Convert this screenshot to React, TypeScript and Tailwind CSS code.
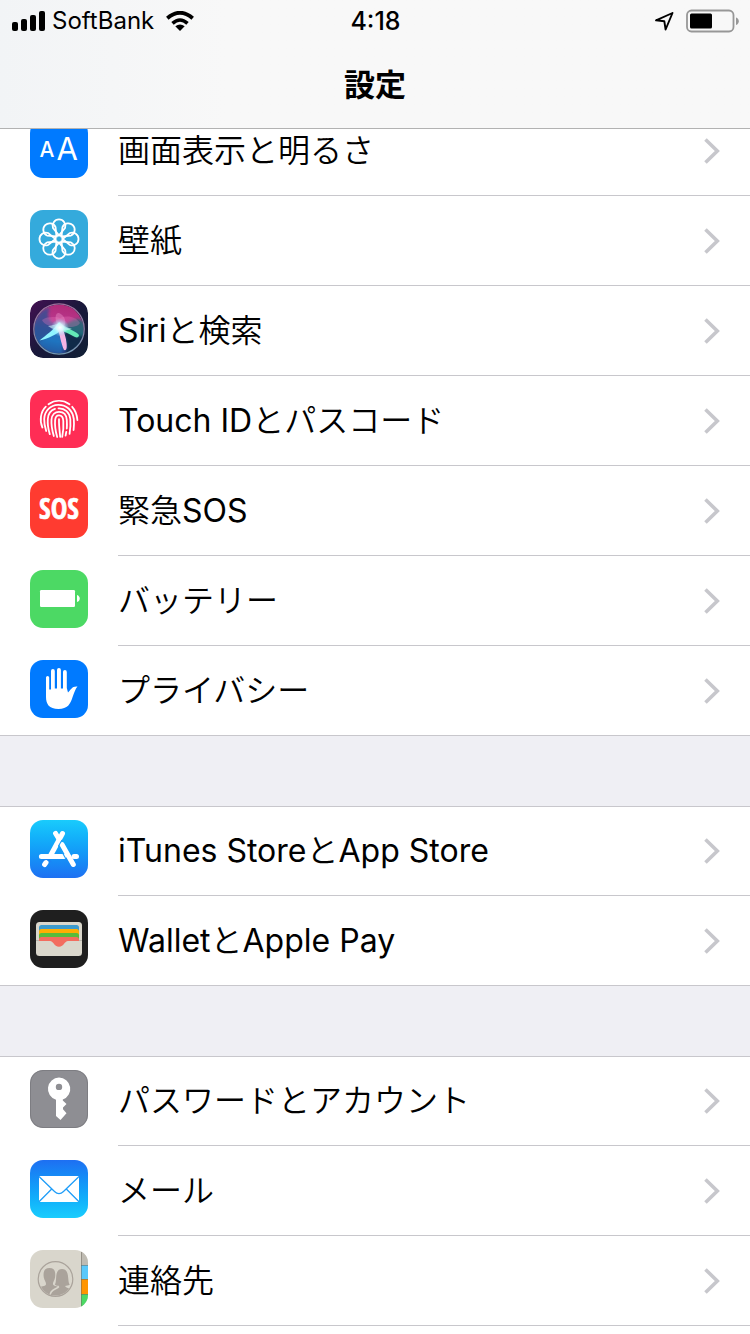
import type { ReactNode } from "react";

function Tile({ className, children }: { className: string; children: ReactNode }) {
  return (
    <svg viewBox="0 0 58 58" aria-hidden="true" className={"mt-3.5 size-[58px] shrink-0 overflow-hidden rounded-[13px] " + className}>
      {children}
    </svg>
  );
}

function DisplayIcon() {
  return (
    <Tile className="bg-[#007aff]">
      <g fill="#fff" fontFamily="Inter, 'Liberation Sans', sans-serif">
        <text x="9.5" y="37" fontSize="21" fontWeight="500">A</text>
        <text x="26.5" y="40" fontSize="31" fontWeight="400">A</text>
      </g>
    </Tile>
  );
}

function WallpaperIcon() {
  const angles = [0, 45, 90, 135, 180, 225, 270, 315];
  return (
    <Tile className="bg-[#34aadc]">
      <g fill="none" stroke="#fff" strokeWidth="1.8">
        {angles.map((a) => (
          <g key={a} transform={`rotate(${a} 29 29)`}>
            <path d="M29 25.4L23 18.1A6.4 6.4 0 1 1 35 18.1Z" />
          </g>
        ))}
        <circle cx="29" cy="29" r="3.6" />
      </g>
    </Tile>
  );
}

function SiriIcon() {
  return (
    <Tile className="">
      <defs>
        <linearGradient id="siri-bg" x1="0" y1="0" x2="1" y2="1">
          <stop offset="0" stopColor="#431052" />
          <stop offset="0.5" stopColor="#19183a" />
          <stop offset="1" stopColor="#102035" />
        </linearGradient>
        <linearGradient id="siri-orb" x1="0.6" y1="0" x2="0.4" y2="1">
          <stop offset="0" stopColor="#b02a78" />
          <stop offset="0.35" stopColor="#b8378c" />
          <stop offset="0.55" stopColor="#3d5ca6" />
          <stop offset="0.75" stopColor="#1f6cb5" />
          <stop offset="1" stopColor="#2b2a6b" />
        </linearGradient>
        <linearGradient id="siri-ring" x1="0" y1="0" x2="0" y2="1">
          <stop offset="0" stopColor="#a06f9c" />
          <stop offset="1" stopColor="#7299b4" />
        </linearGradient>
        <radialGradient id="siri-glow">
          <stop offset="0" stopColor="#fff" />
          <stop offset="0.4" stopColor="#d9fbff" stopOpacity="0.8" />
          <stop offset="1" stopColor="#7fe0ff" stopOpacity="0" />
        </radialGradient>
        <filter id="siri-soft" x="-20%" y="-20%" width="140%" height="140%">
          <feGaussianBlur stdDeviation="1.6" />
        </filter>
        <clipPath id="siri-clip">
          <circle cx="29" cy="29" r="24.5" />
        </clipPath>
      </defs>
      <rect width="58" height="58" rx="13" fill="url(#siri-bg)" />
      <g clipPath="url(#siri-clip)">
        <circle cx="29" cy="29" r="24.5" fill="url(#siri-orb)" />
        <g filter="url(#siri-soft)">
          <path d="M3 30C4 16 12 8 20 8C15 16 20 23 28 28L8 42C4 38 3 34 3 30Z" fill="#2a4f94" opacity="0.8" />
          <path d="M8 43L29 30L33 54C22 56 12 50 8 43Z" fill="#1f7cc8" opacity="0.6" />
          <path d="M31 28L56 36C52 48 44 54 36 56C38 46 35 36 31 28Z" fill="#10243e" opacity="0.9" />
          <path d="M31 27C40 22 48 14 56 24V36L46 36Z" fill="#176b74" opacity="0.85" />
        </g>
        <path d="M12 20C18 16 26 17 30 18C38 15 46 17 50 23C48 27 40 28 30 27C22 27 14 25 12 20Z" fill="#f07cc0" opacity="0.3" />
        <path d="M29 28C23 18 26 12 29 13C34 15 38 22 33 28Z" fill="#f6a3d6" opacity="0.35" />
        <path d="M29 22C24 30 16 35 9.500 40.500C18 39 27 34 33 29Z" fill="#8ff5ff" />
        <path d="M29 24C37 29 45 30 49 35C49 38 46 38 43 36C38 33 33 31 28 30Z" fill="#63eab7" />
        <path d="M27 27C30 34 31 44 34 50C37 51 37 47 36.500 43C36 37 34 32 32 27Z" fill="#f4b4e4" />
        <path d="M18 26C23 25 27 25 30 22C32 26 37 27 42 29C36 31 26 32 18 26Z" fill="#dffcff" opacity="0.6" />
        <circle cx="30" cy="27.500" r="9" fill="url(#siri-glow)" />
      </g>
      <circle cx="29" cy="29" r="25.2" fill="none" stroke="url(#siri-ring)" strokeWidth="1.3" />
    </Tile>
  );
}

function TouchIdIcon() {
  return (
    <Tile className="bg-[#ff2d55]">
      <g fill="none" stroke="#fff" strokeWidth="1.8" strokeLinecap="round">
        <path d="M18.5 14.2C25 9.8 33 9.8 39.5 14.2" />
        <path d="M12.4 37.5C9.4 31 10.4 22 15.8 16.7" />
        <path d="M42.2 16.8C45.4 20.3 47 24.5 47.4 30" />
        <path d="M16.2 41C14.6 36 14 33 14.2 29C14.6 20.6 20.6 15.2 28 14.9C36.5 14.7 42.5 20 43.8 29C44.2 33 44.1 36 43.6 40" />
        <path d="M19.8 44.2C17.9 38 17.4 34 17.8 29C18.2 23.8 21 20.2 25 18.9" />
        <path d="M28.5 18.3C35 18 39.6 22.4 40.3 29C40.7 34 40.4 39 39.6 43.8" />
        <path d="M23.8 46C21.5 38.5 21.2 34 21.5 29.5C21.9 24.7 25 21.8 29 21.8C33.6 21.8 36.5 25 36.8 30C37 33 37 36 36.8 38.5" />
        <path d="M36.3 41.8L35.6 45.7" />
        <path d="M27.2 47C25 39.5 24.8 34 25.1 30.2C25.4 27 27 25.3 29.1 25.4C32 25.5 33.2 28 33.3 31C33.7 37 33.3 42 32.2 46.9" />
        <path d="M29 29.2C28.8 35 29.5 40 30.2 46.8" />
      </g>
    </Tile>
  );
}

function SosIcon() {
  return (
    <Tile className="bg-[#ff3b30]">
      <text x="29" y="39" textAnchor="middle" fill="#fff" stroke="#fff" strokeWidth="0.6" fontSize="28" fontWeight="700" fontFamily="'Open Sans Condensed', 'DejaVu Sans Condensed', 'Liberation Sans Narrow', Roboto, sans-serif">
        SOS
      </text>
    </Tile>
  );
}

function BatteryIcon() {
  return (
    <Tile className="bg-[#4cd964]">
      <rect x="10" y="20" width="35" height="17" rx="1.2" fill="#fff" />
      <path d="M47 25C50.7 26 50.7 31 47 32Z" fill="#fff" />
    </Tile>
  );
}

function PrivacyIcon() {
  return (
    <Tile className="bg-[#007aff]">
      <path
        d="M16 17.500a1.600 1.600 0 0 1 3.200 0V29.500H21V11a1.900 1.900 0 0 1 3.800 0V28.500H27V10a1.950 1.950 0 0 1 3.900 0V28.500H33V12a1.900 1.900 0 0 1 3.800 0V28L38 32.500C41 30 41.500 26 47.500 26.500C45.500 28.500 44.500 32 42.600 37C40.500 44 37.500 49 28.500 49C19 49 16 44 16 37Z"
        fill="#fff"
      />
    </Tile>
  );
}

function StoreIcon() {
  return (
    <Tile className="bg-linear-to-b from-[#1acbfc] to-[#1e70f2]">
      <g stroke="#fff" strokeWidth="5" strokeLinecap="round" fill="none">
        <path d="M32.5 13.5L20 36.5" />
        <path d="M16 42.5L14.6 44.5" />
        <path d="M11.4 36.5H34M44 36.5H46.5" />
        <path d="M25.6 13.5L28.5 18.2" />
        <path d="M32 24.5L43.3 44.5" />
      </g>
      <path d="M32 20L28.5 26L36 39" fill="none" stroke="#1c9df8" strokeWidth="1.1" />
      <path d="M11.5 41.5C14.5 38.5 19 39 21.5 42" fill="none" stroke="#1d83f5" strokeWidth="1.2" />
    </Tile>
  );
}

function WalletIcon() {
  return (
    <Tile className="bg-[#1f1f1f]">
      <rect x="6" y="12" width="46" height="34" rx="3.5" fill="#dad7cc" />
      <path d="M9 31V17.5A2.5 2.5 0 0 1 11.500 15H46.500A2.500 2.500 0 0 1 49 17.500V31Z" fill="#3c9bcd" />
      <path d="M9 31V21.500A2.500 2.500 0 0 1 11.500 19H46.500A2.500 2.500 0 0 1 49 21.500V31Z" fill="#ffae03" />
      <path d="M9 31V25.500A2.500 2.500 0 0 1 11.500 23H46.500A2.500 2.500 0 0 1 49 25.500V31Z" fill="#59bc3b" />
      <path d="M9 31V29.500A2.500 2.500 0 0 1 11.500 27H46.500A2.500 2.500 0 0 1 49 29.500V31H38C34.500 31 34 36.700 29 36.700C24 36.700 23.500 31 20 31Z" fill="#f36d5f" />
      <path d="M6 30.500H9M49 30.500H52" stroke="#b9b6ac" />
    </Tile>
  );
}

function KeyIcon() {
  return (
    <Tile className="bg-[#8e8e93]">
      <rect x="0.5" y="0.5" width="57" height="57" rx="12.5" fill="none" stroke="#7d7d82" />
      <path
        fillRule="evenodd"
        d="M29 7.500A11.400 11.400 0 0 1 32.800 29.600V30.500L36.500 34L33 37.600V39.200L36.500 43.300L30.500 50L26 46V29.800A11.400 11.400 0 0 1 29 7.500ZM29 13.700A3.200 3.200 0 1 0 29 20.100A3.200 3.200 0 1 0 29 13.700Z"
        fill="#fff"
      />
    </Tile>
  );
}

function MailIcon() {
  return (
    <Tile className="bg-linear-to-b from-[#1e6ff2] to-[#1acdfd]">
      <rect x="9" y="16" width="40" height="26" rx="0.8" fill="#fff" />
      <g fill="none" stroke="#1f9df8" strokeWidth="1.3">
        <path d="M9 16.500L24.500 31.500C27.500 34.300 30.500 34.300 33.500 31.500L49 16.500" />
        <path d="M9 41.800L21.700 29M49 41.800L36.300 29" />
      </g>
    </Tile>
  );
}

function ContactsIcon() {
  return (
    <Tile className="bg-[#d9d6cc]">
      <defs>
        <clipPath id="contacts-disc">
          <circle cx="25.500" cy="29" r="16.500" />
        </clipPath>
      </defs>
      <rect x="51" width="7" height="15" fill="#bfbbb2" />
      <rect x="51" y="15" width="7" height="14" fill="#5ac8fa" />
      <rect x="51" y="29" width="7" height="15" fill="#ff9500" />
      <rect x="51" y="44" width="7" height="14" fill="#4cd964" />
      <path d="M51.500 2V56M51 15.500H58M51 29.500H58M51 44.500H58" stroke="#6c655c" strokeOpacity="0.5" />
      <g clipPath="url(#contacts-disc)" fill="#aaa39b">
        <path d="M19.500 18C24.500 18 25.500 21.500 25.200 26C25 30 23 31.500 23 34C23 36 26 35.500 28 37L20 47H8V37.500C12 36 16 36.500 16 34C16 31.500 13.900 30 13.600 26C13.300 21.500 14.500 18 19.500 18Z" />
        <path d="M32 19C37 19 38 24 38.200 28C38.500 32 38.900 33.500 39.800 34.500C38.300 35.700 36.500 35.800 35 36C36 38 39 38 42 40V47H17C18 38.500 26 39 28.500 37C29 36.800 29 36.300 28.800 35.800C27.500 35.800 26 35.800 24.800 34.500C26 33 25.800 31 26.100 28C26.300 24 27 19 32 19Z" />
        <path d="M20 46C20 38.500 27 39.500 28.800 36.500" fill="none" stroke="#d9d6cc" strokeWidth="1.600" />
      </g>
      <circle cx="25.500" cy="29" r="17.300" fill="none" stroke="#aaa39b" strokeWidth="1.200" />
    </Tile>
  );
}

type Run = { text: string; latin?: boolean };
type Item = { icon: ReactNode; label: Run[] };

const groups: Item[][] = [
  [
    { icon: <DisplayIcon />, label: [{ text: "画面表示と明るさ" }] },
    { icon: <WallpaperIcon />, label: [{ text: "壁紙" }] },
    { icon: <SiriIcon />, label: [{ text: "Siri", latin: true }, { text: "と検索" }] },
    { icon: <TouchIdIcon />, label: [{ text: "Touch ID", latin: true }, { text: "とパスコード" }] },
    { icon: <SosIcon />, label: [{ text: "緊急" }, { text: "SOS", latin: true }] },
    { icon: <BatteryIcon />, label: [{ text: "バッテリー" }] },
    { icon: <PrivacyIcon />, label: [{ text: "プライバシー" }] },
  ],
  [
    { icon: <StoreIcon />, label: [{ text: "iTunes Store", latin: true }, { text: "と" }, { text: "App Store", latin: true }] },
    { icon: <WalletIcon />, label: [{ text: "Wallet", latin: true }, { text: "と" }, { text: "Apple Pay", latin: true }] },
  ],
  [
    { icon: <KeyIcon />, label: [{ text: "パスワードとアカウント" }] },
    { icon: <MailIcon />, label: [{ text: "メール" }] },
    { icon: <ContactsIcon />, label: [{ text: "連絡先" }] },
  ],
];

function Row({ item, fullRule }: { item: Item; fullRule: boolean }) {
  return (
    <li>
      <a href="#" className={"flex h-[90px] gap-[30px] pl-[30px] " + (fullRule ? "border-b border-[#c8c7cc]" : "")}>
        {item.icon}
        <span className={"flex min-w-0 flex-1 items-center justify-between pr-[30px] " + (fullRule ? "" : "border-b border-[#c8c7cc]")}>
          <span className="font-['Inter','Noto_Sans_CJK_JP',sans-serif] text-[32px] leading-10 whitespace-nowrap">
            {item.label.map((run) => (
              <span key={run.text} className={run.latin ? "font-normal" : "font-[350]"}>
                {run.text}
              </span>
            ))}
          </span>
          <svg viewBox="0 0 16 26" className="h-[26px] w-4 shrink-0" aria-hidden="true">
            <path d="M1.500 1.500L13.300 13L1.500 24.500" fill="none" stroke="#c7c7cc" strokeWidth="3.600" />
          </svg>
        </span>
      </a>
    </li>
  );
}

function StatusBar() {
  return (
    <div className="grid h-[41px] grid-cols-3 items-center pr-[11px] pl-3 font-['Inter','Liberation_Sans',sans-serif] text-[24px] leading-6">
      <div className="flex items-center gap-1.5">
        <svg viewBox="0 0 34 20" className="h-5 w-[34px]" aria-hidden="true">
          <rect y="11" width="6" height="9" rx="2" />
          <rect x="9" y="8" width="6" height="12" rx="2" />
          <rect x="18" y="4" width="6" height="16" rx="2" />
          <rect x="27" width="6" height="20" rx="2" />
        </svg>
        <span>SoftBank</span>
        <svg viewBox="0 0 28 20" className="ml-1.5 h-5 w-7" aria-hidden="true">
          <path d="M14 20L9.300 15.300Q14 11.600 18.700 15.300Z" />
          <path d="M6.500 12.300Q14 5.700 21.500 12.300" fill="none" stroke="#000" strokeWidth="3.600" />
          <path d="M1.300 7.200Q14 -3.700 26.700 7.200" fill="none" stroke="#000" strokeWidth="3.800" />
        </svg>
      </div>
      <span className="text-center text-[25px] font-medium">4:18</span>
      <div className="flex items-center justify-end gap-3">
        <svg viewBox="0 0 20 20" className="size-5" aria-hidden="true">
          <path d="M18.500 2L2 9.300L10.300 10.200L11.600 18.500Z" fill="none" stroke="#000" strokeWidth="1.900" strokeLinejoin="round" />
        </svg>
        <svg viewBox="0 0 53 24" className="h-6 w-[53px]" aria-hidden="true">
          <rect x="1" y="1.500" width="46.500" height="21" rx="4.500" fill="none" stroke="#979797" strokeWidth="1.800" />
          <rect x="4" y="4.500" width="22" height="15" rx="1.500" />
          <path d="M50 8.500C53.700 9.500 53.700 15 50 16Z" fill="#979797" />
        </svg>
      </div>
    </div>
  );
}

export default function App() {
  return (
    <div className="min-h-screen overflow-hidden bg-white font-['Noto_Sans_CJK_JP','Noto_Sans',sans-serif] text-black">
      <header className="relative z-10 h-[129px] border-b border-[#b2b2b2] bg-linear-to-r from-[#f2f4f6] to-[#f8f8f8] to-30%">
        <StatusBar />
        <h1 className="pt-[22px] text-center text-[31px] leading-10 font-bold">設定</h1>
      </header>
      <main className="-mt-[23px] flex flex-col gap-[70px] bg-[#efeff4]">
        {groups.map((items, g) => (
          <ul key={g} className="bg-white shadow-[inset_0_1px_0_#c8c7cc]">
            {items.map((item, i) => (
              <Row key={i} item={item} fullRule={i === items.length - 1 && g < groups.length - 1} />
            ))}
          </ul>
        ))}
      </main>
    </div>
  );
}
